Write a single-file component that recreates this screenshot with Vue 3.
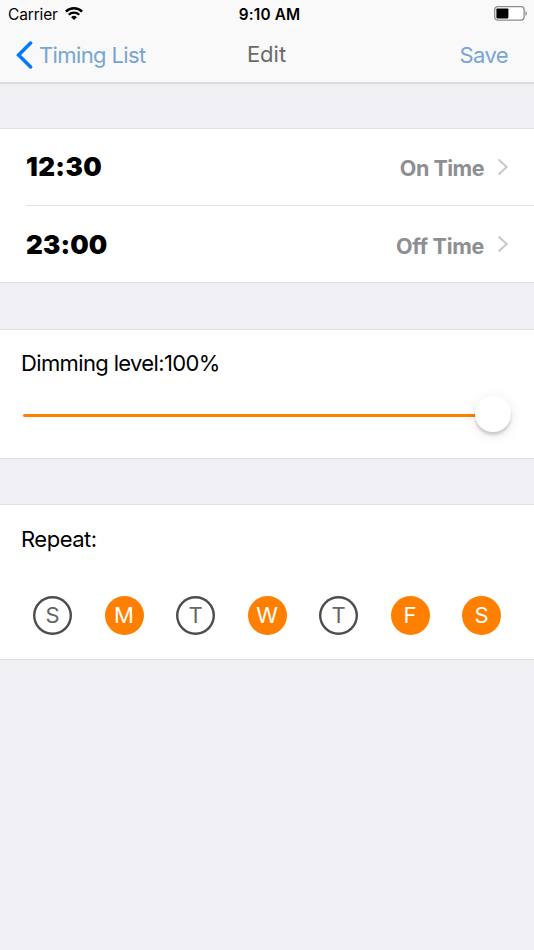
<script setup>
import { ref, computed } from 'vue'

const times = ref([
  { time: '12:30', label: 'On Time', key: 'on' },
  { time: '23:00', label: 'Off Time', key: 'off' },
])
const level = ref(100)
const fillWidth = computed(() => level.value + '%')
const days = ref([
  { letter: 'S', on: false },
  { letter: 'M', on: true },
  { letter: 'T', on: false },
  { letter: 'W', on: true },
  { letter: 'T', on: false },
  { letter: 'F', on: true },
  { letter: 'S', on: true },
])
</script>

<template>
  <div class="screen">
    <header class="top">
      <div class="status">
        <div class="status-left">
          <span class="carrier">Carrier</span>
          <svg class="wifi" width="18" height="13" viewBox="0 0 18 13">
            <path d="M0.9 4.6 A11.6 11.6 0 0 1 17.1 4.6" fill="none" stroke="#000" stroke-width="2.5" />
            <path d="M3.7 7.7 A7.6 7.6 0 0 1 14.3 7.7" fill="none" stroke="#000" stroke-width="2.2" />
            <path d="M9 13 L6.1 10.2 A4.1 4.1 0 0 1 11.9 10.2 Z" fill="#000" />
          </svg>
        </div>
        <span class="clock">9:10 AM</span>
        <div class="status-right">
          <svg width="34" height="15" viewBox="0 0 34 15">
            <rect x="0.7" y="0.7" width="29.4" height="13.4" rx="3" fill="#fff" stroke="#8c8c88" stroke-width="1.3" />
            <rect x="2.4" y="2.4" width="12" height="10" rx="0.8" fill="#000" />
            <path d="M31.5 5 C33.5 5.8 33.5 9 31.5 9.8 Z" fill="#8c8c88" />
          </svg>
        </div>
      </div>
      <nav class="nav">
        <a class="back">
          <svg width="17" height="28" viewBox="0 0 17 28">
            <path d="M14.6 2 L2.6 14 L14.6 26" fill="none" stroke="#007aff" stroke-width="3.5" stroke-linecap="round" />
          </svg>
          <span class="back-text">Timing List</span>
        </a>
        <span class="title">Edit</span>
        <a class="save">Save</a>
      </nav>
    </header>

    <section class="panel times">
      <div v-for="t in times" :key="t.key" class="row">
        <span class="time" :class="t.key">{{ t.time }}</span>
        <span class="label" :class="t.key">{{ t.label }}</span>
        <svg class="chevron" width="12" height="18" viewBox="0 0 12 18">
          <path d="M1.5 1.5 L9.7 9 L1.5 16.5" fill="none" stroke="#c7c7cc" stroke-width="2" />
        </svg>
      </div>
    </section>

    <section class="panel dimming">
      <div class="caption dim-caption">Dimming level:{{ level }}%</div>
      <div class="slider">
        <div class="fill" :style="{ width: fillWidth }"></div>
        <div class="thumb"></div>
      </div>
    </section>

    <section class="panel repeat">
      <div class="caption repeat-caption">Repeat:</div>
      <div class="days">
        <span v-for="(d, i) in days" :key="i" class="day" :class="{ on: d.on }">{{ d.letter }}</span>
      </div>
    </section>
  </div>
</template>

<style>
body {
  background: #efeff4;
}
</style>

<style scoped>
.screen {
  width: 534px;
  height: 950px;
  background: #efeff4;
  font-family: Inter, 'Liberation Sans', sans-serif;
  color: #000;
  overflow: hidden;
}
.screen * {
  box-sizing: border-box;
}
.top {
  height: 84px;
  background: #f9f9f9;
  border-bottom: 2px solid #dcdcdf;
}
.status {
  height: 28px;
  display: grid;
  grid-template-columns: 1fr auto 1fr;
  align-items: center;
  padding: 0 6px 0 8px;
}
.status-left {
  display: flex;
  align-items: center;
  gap: 7px;
}
.carrier {
  font-size: 15.5px;
  line-height: 28px;
  padding-top: 1px;
  letter-spacing: -0.15px;
}
.wifi {
  margin-top: -3px;
}
.clock {
  font-size: 15.3px;
  font-weight: 600;
  line-height: 28px;
  padding: 1px 0 0 3px;
  letter-spacing: 0.15px;
}
.status-right {
  display: flex;
  justify-content: flex-end;
  margin-top: -2px;
}
.nav {
  height: 54px;
  display: grid;
  grid-template-columns: 1fr auto 1fr;
  align-items: center;
  padding: 0 26px 0 16px;
  font-size: 22px;
  line-height: 54px;
}
.back {
  display: flex;
  align-items: center;
  gap: 6px;
}
.back-text,
.save {
  font-weight: 380;
  letter-spacing: -0.62px;
  color: #77a6d3;
}
.title {
  color: #6b6b6b;
  font-weight: 380;
  padding-left: 9px;
}
.save {
  text-align: right;
}
.back-text,
.save {
  margin-top: -1px;
}
.title {
  margin-top: -2px;
}
.panel {
  background: #fff;
  border-top: 1px solid #e0e0e4;
  border-bottom: 1px solid #dddde0;
}
.times {
  margin-top: 44px;
  height: 155px;
  padding-left: 26px;
}
.row {
  height: 76px;
  display: flex;
  align-items: center;
  padding-right: 25px;
}
.row + .row {
  height: 77px;
  border-top: 1px solid #e2e2e4;
}
.time {
  flex: 1;
  font-size: 26px;
  font-weight: 870;
  letter-spacing: 0.1px;
}
.time.on {
  letter-spacing: 0.4px;
  margin-top: -2px;
}
.label {
  font-size: 21.5px;
  font-weight: 700;
  letter-spacing: -0.4px;
  color: #8e8e93;
  margin-top: 3px;
}
.label.on {
  letter-spacing: -0.5px;
  margin-top: 2px;
}
.label.off {
  letter-spacing: -0.3px;
}
.chevron {
  margin-left: 13px;
  margin-top: -1px;
}
.dimming {
  margin-top: 46px;
  height: 130px;
}
.caption {
  padding-left: 21px;
  font-size: 22px;
  font-weight: 390;
  line-height: 28px;
  letter-spacing: -0.64px;
}
.dim-caption {
  padding-top: 19px;
}
.slider {
  margin: 19px 23px 0;
  height: 38px;
  display: flex;
  align-items: center;
}
.fill {
  height: 3px;
  border-radius: 2px;
  background: #ff8000;
}
.thumb {
  flex: none;
  width: 36px;
  height: 36px;
  margin-left: -36px;
  margin-top: -2px;
  border-radius: 50%;
  background: #fff;
  box-shadow: 0 3px 3px rgba(0, 0, 0, 0.16), 0 3px 14px rgba(0, 0, 0, 0.1);
}
.repeat {
  margin-top: 45px;
  height: 156px;
}
.repeat-caption {
  padding-top: 20px;
  letter-spacing: -0.5px;
}
.days {
  display: flex;
  justify-content: space-between;
  padding: 0 33px;
  margin-top: 43px;
}
.day {
  width: 39px;
  height: 39px;
  border-radius: 50%;
  color: #666;
  font-size: 22px;
  font-weight: 380;
  line-height: 39px;
  text-align: center;
  box-shadow: inset 0 0 0 2.4px #4d4d4d;
}
.day.on {
  background: #ff8000;
  box-shadow: none;
  color: #fff;
}
</style>
